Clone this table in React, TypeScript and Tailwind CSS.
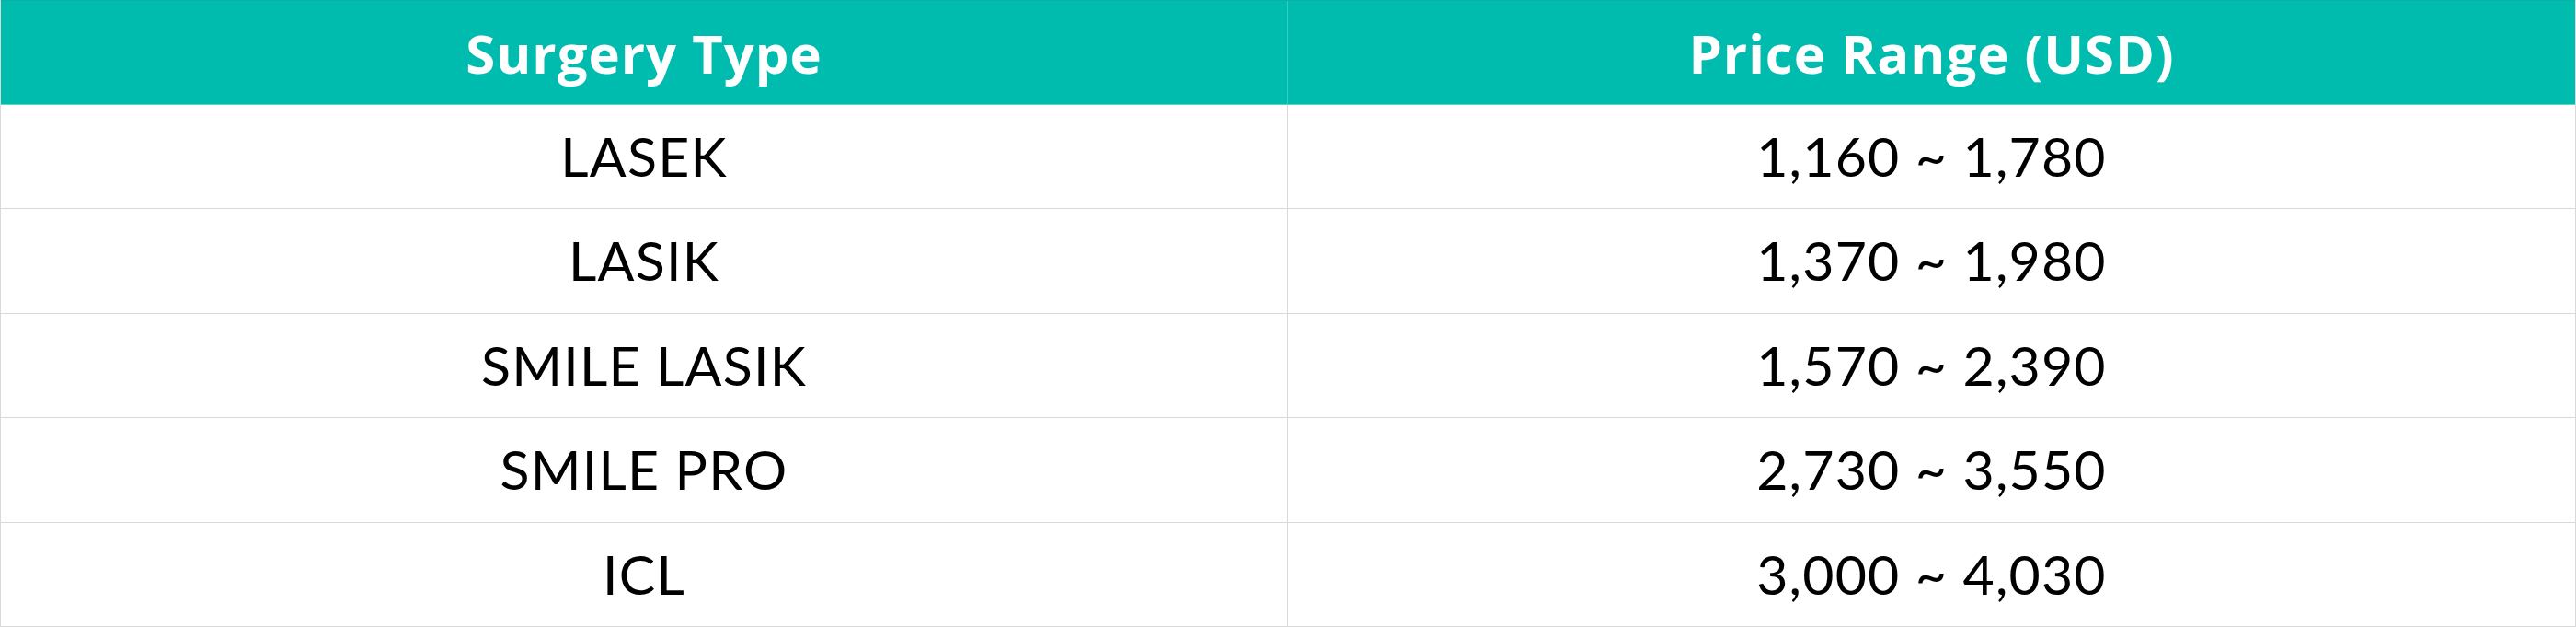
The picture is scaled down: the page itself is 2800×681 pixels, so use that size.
import React from "react";

const rows: [string, string][] = [
  ["LASEK", "1,160 ~ 1,780"],
  ["LASIK", "1,370 ~ 1,980"],
  ["SMILE LASIK", "1,570 ~ 2,390"],
  ["SMILE PRO", "2,730 ~ 3,550"],
  ["ICL", "3,000 ~ 4,030"],
];

export default function App() {
  return (
    <div className="w-[2800px] h-[681px] bg-white border-l border-r border-[#d9d9d9] flex flex-col">
      <div
        className="h-[114px] shrink-0 bg-[#00bcaf] border-t border-[#13aea2] border-b border-b-[#5fd3ca] grid grid-cols-2 text-white font-bold text-[58px] tracking-[1px]"
        style={{ fontFamily: "'Open Sans', Lato, sans-serif" }}
      >
        <div className="flex items-center justify-center border-r border-[#3ccabf]">Surgery Type</div>
        <div className="flex items-center justify-center">Price Range (USD)</div>
      </div>
      {rows.map(([a, b]) => (
        <div
          key={a}
          className="flex-1 grid grid-cols-2 border-b border-[#d9d9d9] text-black text-[59px] tracking-[1.2px]"
          style={{ fontFamily: "Lato, 'Noto Sans', sans-serif" }}
        >
          <div className="flex items-center justify-center border-r border-[#d9d9d9]">{a}</div>
          <div className="flex items-center justify-center">{b}</div>
        </div>
      ))}
    </div>
  );
}
